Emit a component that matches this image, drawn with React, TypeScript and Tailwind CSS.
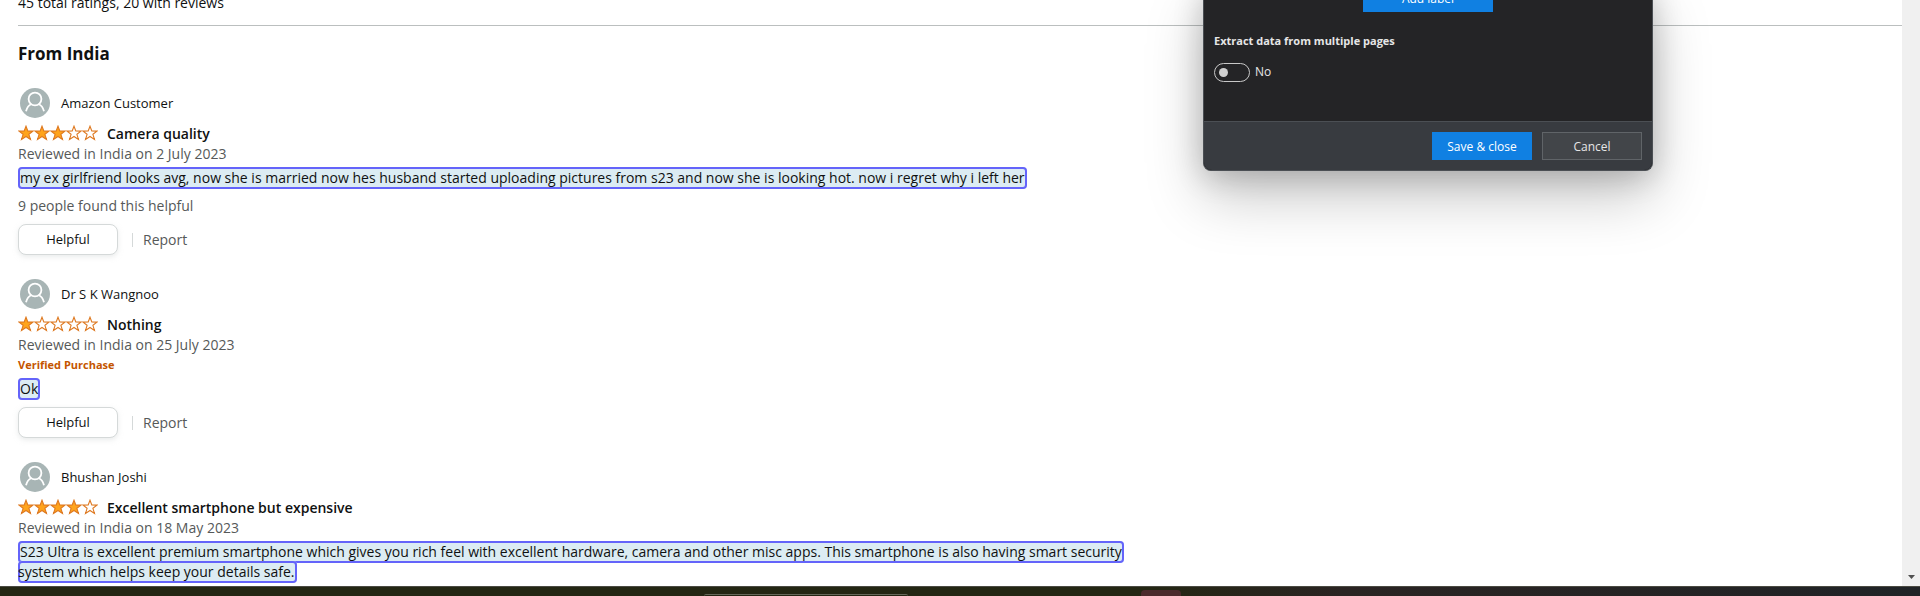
import { useState } from "react";

type Review = {
  name: string;
  stars: number;
  title: string;
  date: string;
  verified?: boolean;
  body: string;
  helpful?: string;
  actions: boolean;
};

const reviews: Review[] = [
  {
    name: "Amazon Customer",
    stars: 3,
    title: "Camera quality",
    date: "Reviewed in India on 2 July 2023",
    body: "my ex girlfriend looks avg, now she is married now hes husband started uploading pictures from s23 and now she is looking hot. now i regret why i left her",
    helpful: "9 people found this helpful",
    actions: true,
  },
  {
    name: "Dr S K Wangnoo",
    stars: 1,
    title: "Nothing",
    date: "Reviewed in India on 25 July 2023",
    verified: true,
    body: "Ok",
    actions: true,
  },
  {
    name: "Bhushan Joshi",
    stars: 4,
    title: "Excellent smartphone but expensive",
    date: "Reviewed in India on 18 May 2023",
    body: "S23 Ultra is excellent premium smartphone which gives you rich feel with excellent hardware, camera and other misc apps. This smartphone is also having smart security system which helps keep your details safe.",
    actions: false,
  },
];

function Avatar() {
  return (
    <svg viewBox="0 0 34 34" className="size-[34px] shrink-0" aria-hidden="true">
      <circle cx="17" cy="17" r="15" fill="#a8b5b5" />
      <g fill="none" stroke="#fff" strokeWidth="1.8">
        <circle cx="17" cy="13" r="6.4" />
        <path d="M8 25.2c1-3.6 3-6.2 5.5-7.2M26 25.2c-1-3.6-3-6.2-5.5-7.2" />
      </g>
    </svg>
  );
}

function Stars({ count }: { count: number }) {
  return (
    <span className="flex h-5 items-center pb-0.5" role="img" aria-label={`${count} out of 5 stars`}>
      {[0, 1, 2, 3, 4].map((i) => (
        <svg key={i} viewBox="0 0 16 16" className="size-4">
          <path
            d="M8 1.2 9.8 6 15 6.1 10.900 9.300 12.500 14.500 8 11.500 3.500 14.500 5.100 9.300 1 6.100 6.200 6Z"
            fill={i < count ? "#ffa41c" : "#fff"}
            stroke="#de7921"
            strokeWidth="1.1"
          />
        </svg>
      ))}
    </span>
  );
}

function ReviewItem({ review }: { review: Review }) {
  return (
    <article>
      <div className="flex items-center gap-[9px] text-[13px] leading-5">
        <Avatar />
        <span>{review.name}</span>
      </div>
      <div className="mt-1 flex items-center gap-[9px]">
        <Stars count={review.stars} />
        <h3 className="font-semibold">{review.title}</h3>
      </div>
      <p className="text-[#565959]">{review.date}</p>
      {review.verified && (
        <p className="text-[11px] leading-5 font-bold text-[#c45500]">Verified Purchase</p>
      )}
      <p className="mt-1 max-w-[1120px]">
        <span className="rounded-sm bg-[#dcecf3] box-decoration-clone pt-px pr-0.5 pb-0.5 inset-shadow-[0_0_0_2px_#6464fa] before:inline-block before:w-0.5 before:content-['']">
          {review.body}
        </span>
      </p>
      {review.helpful && <p className="mt-2 text-[#565959]">{review.helpful}</p>}
      {review.actions && (
        <div className="mt-2 flex items-center">
          <button className="h-[31px] w-[100px] rounded-lg border border-[#d5d9d9] bg-white pb-0.5 text-[13px] shadow-[0_2px_5px_rgba(213,217,217,0.5)]">
            Helpful
          </button>
          <span className="ml-3.5 h-3.5 w-px bg-[#d5d9d9]" />
          <a href="#report" className="ml-2.5 text-[#565959]">
            Report
          </a>
        </div>
      )}
    </article>
  );
}

function ExtractDialog() {
  const [multi, setMulti] = useState(false);
  return (
    <section
      role="dialog"
      aria-label="Extract data"
      className="absolute -top-4 right-[267px] w-[450px] rounded-lg border border-t-0 border-[#4b4f54] bg-[#242426] font-['Open_Sans',sans-serif] text-xs text-[#e6e6e6] shadow-[0_26px_58px_rgba(0,0,0,0.22),0_5px_30px_rgba(0,0,0,0.2)]"
    >
      <div className="flex h-[137px] flex-col items-start px-2.5">
        <button className="h-7 w-[130px] self-center bg-[#1080e2] pt-0.5 font-medium text-white">Add label</button>
        <h2 className="mt-[19px] text-[11px] leading-5 font-bold">Extract data from multiple pages</h2>
        <label className="mt-[11px] flex items-center gap-[5px] leading-5">
          <input
            type="checkbox"
            role="switch"
            checked={multi}
            onChange={(e) => setMulti(e.target.checked)}
            className="peer sr-only"
          />
          <span className="flex h-[19px] w-9 items-center rounded-full border border-[#c8c8c8] px-1 peer-checked:justify-end">
            <span className="size-[9px] rounded-full bg-[#d0d0d0]" />
          </span>
          <span>{multi ? "Yes" : "No"}</span>
        </label>
      </div>
      <footer className="flex justify-end gap-2.5 rounded-b-lg border-t border-[#4b4f54] bg-[#383b40] p-2.5">
        <button className="h-7 w-[100px] bg-[#1080e2] pt-0.5 font-medium text-white">Save &amp; close</button>
        <button className="h-7 w-[100px] border border-[#606468] bg-[#424549] pt-0.5 font-medium">Cancel</button>
      </footer>
    </section>
  );
}

export default function App() {
  return (
    <div className="relative flex min-h-screen flex-col overflow-hidden bg-white font-['Open_Sans',sans-serif] text-sm leading-5 text-[#0f1111]">
      <div className="flex flex-1">
        <main className="min-w-0 flex-1 pb-1 pl-[18px]">
          <p className="-mt-[7px]">45 total ratings, 20 with reviews</p>
          <hr className="mt-3 border-[#bbbfbf]" />
          <h2 className="mt-4 mb-5 text-[17px] leading-6 font-bold">From India</h2>
          <div className="flex flex-col gap-[22px]">
            {reviews.map((r) => (
              <ReviewItem key={r.name} review={r} />
            ))}
          </div>
        </main>
        <div className="flex w-[18px] flex-col items-center justify-end bg-[#f0f0f0] pb-[7px]">
          <svg viewBox="0 0 7 4" className="h-1 w-[7px]" aria-hidden="true">
            <path d="M0 0h7L3.5 4z" fill="#505050" />
          </svg>
        </div>
      </div>
      <div className="flex h-2.5 items-end border-t border-[#4a4a42] bg-linear-to-r from-[#242613] from-60% via-[#2a2422] via-70% to-[#202326]">
        <div className="ml-[704px] h-0.5 w-[204px] rounded-t-xl border-t border-[#66685a]" />
        <div className="ml-[233px] h-1.5 w-10 rounded-t bg-[#4b2a2c]" />
      </div>
      <ExtractDialog />
    </div>
  );
}
